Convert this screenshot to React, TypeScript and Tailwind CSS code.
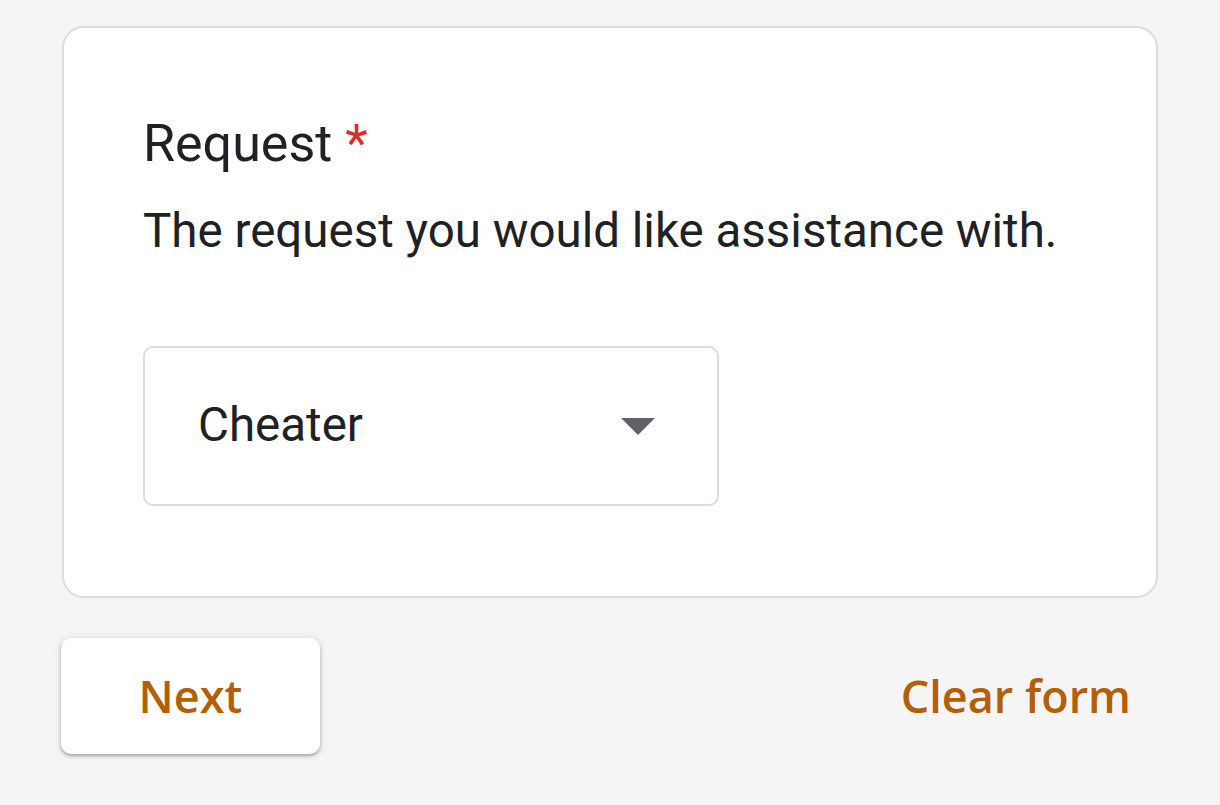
import React from "react";

export default function App() {
  return (
    <div className="min-h-[805px] w-[1220px] bg-[#f5f5f5] pt-[26px] pl-[62px]" style={{ fontFamily: "Roboto, 'Noto Sans', sans-serif" }}>
      <div className="w-[1096px] h-[572px] bg-white border-2 border-[#dadce0] rounded-[22px] pl-[79px] pt-[86px]">
        <div className="text-[52px] leading-[60px] text-[#202124]">
          Request <span className="text-[#d93025]">*</span>
        </div>
        <div className="mt-[27px] text-[47.5px] leading-[60px] text-[#202124]">
          The request you would like assistance with.
        </div>
        <div className="mt-[85px] w-[576px] h-[160px] border-2 border-[#dadce0] rounded-[10px] flex items-center justify-between pl-[53px] pr-[62px]">
          <span className="text-[47.5px] text-[#202124]">Cheater</span>
          <svg width="34" height="17" viewBox="0 0 34 17">
            <path d="M0 0 L34 0 L17 17 Z" fill="#5f6368" />
          </svg>
        </div>
      </div>
      <div className="mt-[40px] w-[1096px] flex items-center justify-between">
        <button className="w-[259px] h-[116px] -ml-[1px] bg-white rounded-[10px] shadow-[0_2px_3px_rgba(60,64,67,0.35),0_1px_6px_1px_rgba(60,64,67,0.15)] text-[45px] font-semibold text-[#b45f06]" style={{ fontFamily: "'Open Sans', sans-serif" }}>
          Next
        </button>
        <button className="mr-[27px] text-[45px] font-semibold text-[#b45f06]" style={{ fontFamily: "'Open Sans', sans-serif" }}>
          Clear form
        </button>
      </div>
    </div>
  );
}
